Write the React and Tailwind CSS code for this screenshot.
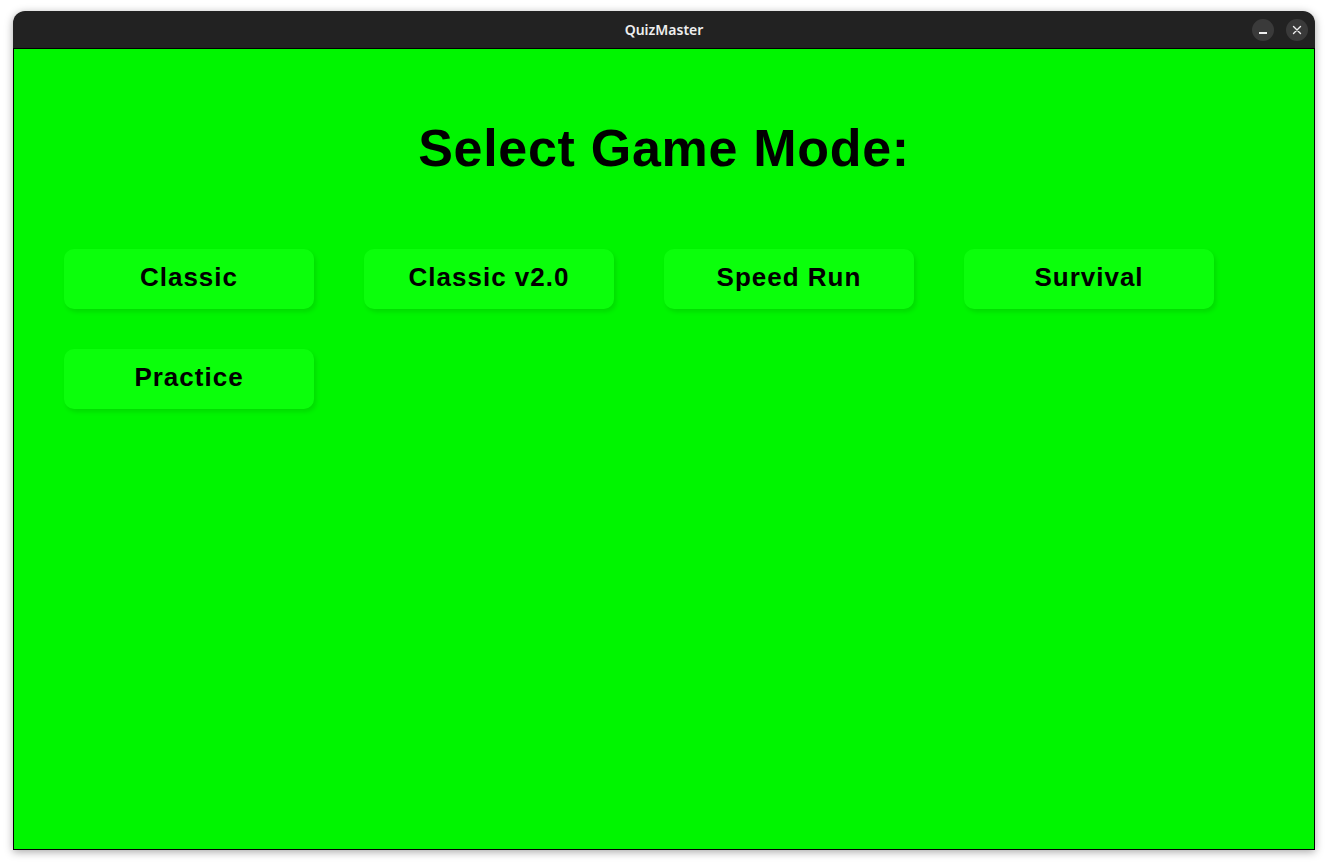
export default function App() {
  const modes = ["Classic", "Classic v2.0", "Speed Run", "Survival", "Practice"];

  return (
    <div className="w-[1328px] h-[866px] bg-white pt-[11px] pl-[13px]">
      <div className="w-[1302px] h-[839px] flex flex-col rounded-t-[12px] overflow-hidden shadow-[0_2px_8px_rgba(0,0,0,0.35)]">
        <div className="h-[38px] bg-[#222222] flex items-center relative border-b border-black">
          <div className="flex-1 text-center text-[14px] font-semibold text-[#eeeeee] font-['Noto_Sans',sans-serif]">
            QuizMaster
          </div>
          <div className="absolute right-[7px] top-[8px] flex gap-[12px]">
            <div className="w-[22px] h-[22px] rounded-full bg-[#3a3a3a] flex items-center justify-center">
              <div className="w-[8px] h-[1.5px] bg-[#eeeeee] mt-[6px]"></div>
            </div>
            <div className="w-[22px] h-[22px] rounded-full bg-[#3a3a3a] flex items-center justify-center">
              <svg width="10" height="10" viewBox="0 0 10 10">
                <path d="M1.5 1.5 L8.5 8.5 M8.5 1.5 L1.5 8.5" stroke="#eeeeee" strokeWidth="1.4" strokeLinecap="round" />
              </svg>
            </div>
          </div>
        </div>
        <div className="flex-1 bg-[#00f500] border-x border-b border-black font-['Liberation_Sans',Arial,sans-serif] text-black">
          <h1 className="pt-[73px] text-center text-[52px] leading-none font-bold tracking-[0.7px]">
            Select Game Mode:
          </h1>
          <div className="mt-[75px] pl-[50px] grid grid-cols-[repeat(4,250px)] gap-x-[50px] gap-y-[40px]">
            {modes.map((m) => (
              <button
                key={m}
                className="h-[60px] pb-[4px] rounded-[10px] bg-[#0bff0b] shadow-[2px_3px_4px_rgba(0,80,0,0.15)] text-[26px] leading-none font-bold tracking-[1px]"
              >
                {m}
              </button>
            ))}
          </div>
        </div>
      </div>
    </div>
  );
}
